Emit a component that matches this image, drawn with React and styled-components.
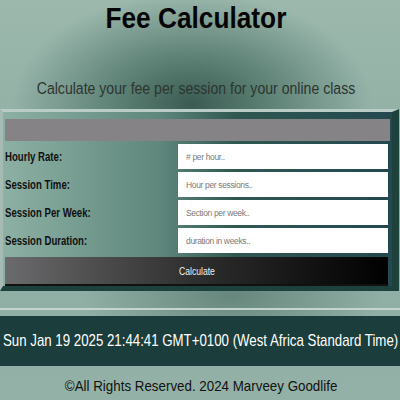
import React from "react";
import styled, { createGlobalStyle } from "styled-components";

const Global = createGlobalStyle`
  html, body { margin: 0; padding: 0; }
  body {
    width: 400px;
    height: 400px;
    overflow: hidden;
    font-family: "Liberation Sans", Arial, sans-serif;
    background: #95b3a8;
  }
`;

const Page = styled.div`
  width: 400px;
  height: 400px;
  display: flex;
  flex-direction: column;
  background:
    radial-gradient(ellipse 150px 60px at 58% 74%, rgba(60,95,85,0.5), rgba(60,95,85,0) 100%),
    radial-gradient(ellipse 180px 110px at 48% 26%, #3b5b52 0%, #5b7f73 40%, rgba(130,163,151,0) 100%),
    linear-gradient(180deg, #9cb8ad 0%, #8eada2 50%, #93b1a6 100%);
`;

/* The reference text is horizontally condensed; squeeze glyphs with a scale. */
const Squeeze = styled.span`
  display: inline-block;
  white-space: nowrap;
  transform: scaleX(${(p) => p.$x});
  transform-origin: ${(p) => p.$origin || "center"};
`;

const Title = styled.h1`
  margin: 0;
  height: 38px;
  font-size: 29px;
  font-weight: bold;
  color: #050505;
  text-align: center;
  line-height: 36px;
  padding-right: 8px;
`;

const Subtitle = styled.p`
  margin: 41px 0 0;
  font-size: 16px;
  line-height: 20px;
  color: #2c3531;
  text-align: center;
  padding-right: 8px;
`;

const Form = styled.form`
  margin-top: 10px;
  width: 385px;
  box-sizing: content-box;
  border-top: 3px solid #b9ccc5;
  border-left: 3px solid #a5bbb3;
  border-right: 7px solid #1d423e;
  border-bottom: 5px solid #1d423e;
  padding: 7px 2px 0;
  background: linear-gradient(90deg, #8db0a4 0%, #5f877c 40%, #2f5751 60%, #24484f 100%);
  display: flex;
  flex-direction: column;
  gap: 3px;
`;

const HeaderBar = styled.div`
  height: 22px;
  background: #858386;
`;

const Grid = styled.div`
  display: grid;
  grid-template-columns: 173px 1fr;
  row-gap: 3px;
  align-items: center;
  padding-right: 2px;
`;

const Label = styled.label`
  font-size: 12px;
  font-weight: bold;
  color: #111;
`;

const Input = styled.input`
  height: 25px;
  box-sizing: border-box;
  border: none;
  outline: none;
  background: #fff;
  padding: 0 8px;
  font-family: inherit;
  font-size: 8.5px;
  letter-spacing: -0.35px;
  color: #333;
  &::placeholder { color: #7a7a7a; }
`;

const Button = styled.button`
  margin: 1px 2px 0 0;
  height: 29px;
  border: none;
  border-bottom: 2px solid #111;
  background: linear-gradient(90deg, #6b6a6c 0%, #2e2e2e 50%, #000 100%);
  color: #f2f2f2;
  font-family: inherit;
  font-size: 11px;
  cursor: pointer;
`;

const Rule = styled.div`
  margin-top: 17px;
  height: 2px;
  background: #c4d5ce;
`;

const DateBar = styled.div`
  margin-top: 6px;
  height: 50px;
  background: #1b3d3b;
  color: #fff;
  font-size: 17px;
  display: flex;
  align-items: center;
  padding-left: 3px;
  overflow: hidden;
`;

const Footer = styled.div`
  margin-top: 11px;
  text-align: center;
  font-size: 15px;
  color: #111;
  padding-left: 3px;
`;

const fields = [
  ["Hourly Rate:", "# per hour.."],
  ["Session Time:", "Hour per sessions.."],
  ["Session Per Week:", "Section per week.."],
  ["Session Duration:", "duration in weeks.."],
];

export default function App() {
  return (
    <Page>
      <Global />
      <Title>
        <Squeeze $x={0.905}>Fee Calculator</Squeeze>
      </Title>
      <Subtitle>
        <Squeeze $x={0.88}>Calculate your fee per session for your online class</Squeeze>
      </Subtitle>
      <Form onSubmit={(e) => e.preventDefault()}>
        <HeaderBar />
        <Grid>
          {fields.map(([l, p]) => (
            <React.Fragment key={l}>
              <Label>
                <Squeeze $x={0.8} $origin="left">{l}</Squeeze>
              </Label>
              <Input placeholder={p} />
            </React.Fragment>
          ))}
        </Grid>
        <Button type="submit">
          <Squeeze $x={0.78}>Calculate</Squeeze>
        </Button>
      </Form>
      <Rule />
      <DateBar>
        <Squeeze $x={0.78} $origin="left">
          Sun Jan 19 2025 21:44:41 GMT+0100 (West Africa Standard Time)
        </Squeeze>
      </DateBar>
      <Footer>
        <Squeeze $x={0.89}>©All Rights Reserved. 2024 Marveey Goodlife</Squeeze>
      </Footer>
    </Page>
  );
}
